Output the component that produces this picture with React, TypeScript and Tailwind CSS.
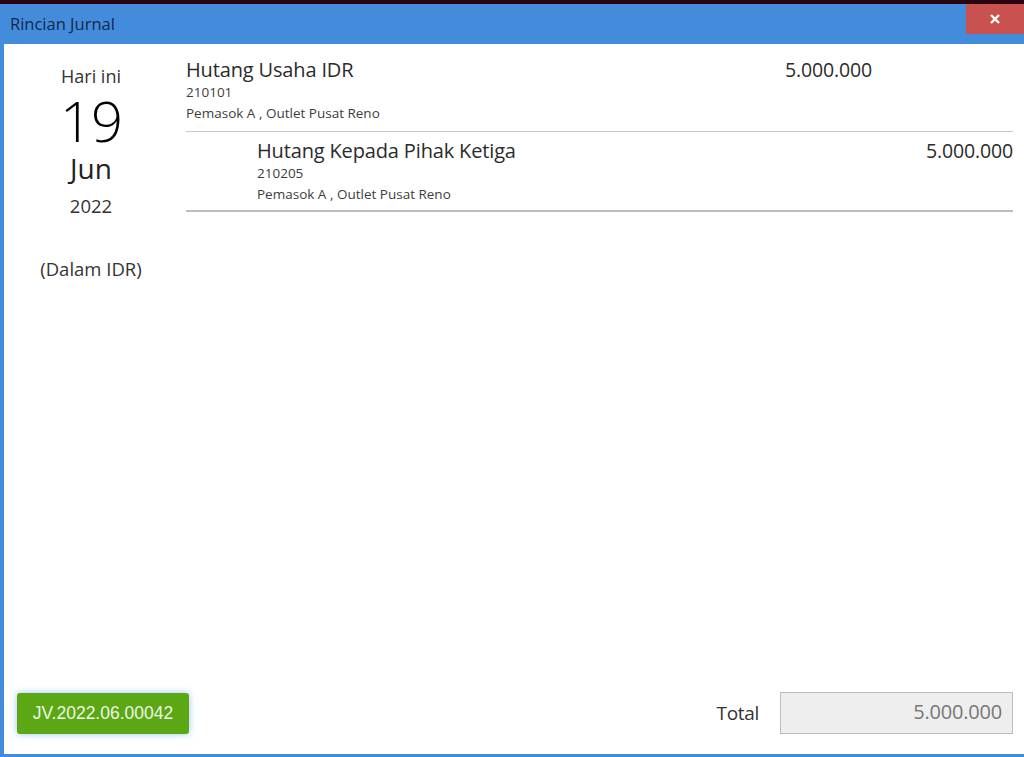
const font = "font-['Open_Sans','Noto_Sans',sans-serif]";

function JournalRow({ name, code, note, amount, indent }: { name: string; code: string; note: string; amount: string; indent?: boolean }) {
  return (
    <div className={indent ? 'flex h-[80px] border-b-2 border-[#bdbdbd] pt-[5px]' : 'flex h-[80.5px] border-b border-[#c8c8c8] pt-[5px]'}>
      <div className={indent ? 'w-[71px] shrink-0' : 'hidden'} />
      <div className="flex-1">
        <div className="text-[20px] leading-[28px] tracking-[-0.15px] text-[#2b2b2b]">{name}</div>
        <div className="text-[13.5px] leading-[17px] text-[#3d3d3d]">{code}</div>
        <div className="mt-[4px] text-[13.5px] leading-[17px] text-[#3d3d3d]">{note}</div>
      </div>
      <div className={indent ? 'text-right' : 'pr-[141px] text-right'}>
        <div className="text-[19.5px] leading-[28px] tracking-[-0.15px] text-[#2b2b2b]">{amount}</div>
      </div>
    </div>
  );
}

export default function App() {
  return (
    <div className={`h-[757px] w-[1024px] overflow-hidden bg-[#2a0510] pt-[4px] ${font}`}>
      <div className="flex h-[753px] flex-col bg-[#438cdc]">
        {/* Title bar */}
        <div className="flex h-[40px] shrink-0 items-start justify-between">
          <div className="pl-[10px] pt-[9px] text-[16.5px] leading-[21px] text-[#10294a]">Rincian Jurnal</div>
          <button className="flex h-[30px] w-[58px] items-center justify-center bg-[#c9514f]">
            <svg width="10" height="10" viewBox="0 0 10 10">
              <path d="M1 1l8 8M9 1l-8 8" stroke="#fff" strokeWidth="2.4" />
            </svg>
          </button>
        </div>

        {/* Body */}
        <div className="mb-[3px] ml-[4px] flex flex-1 flex-col bg-white">
          <div className="flex flex-1">
            <div className="w-[174px] shrink-0 pt-[20px] text-center text-[#333]">
              <div className="text-[18px] leading-[25px]">Hari ini</div>
              <div className="text-[56px] font-light leading-[62px] tracking-[-1px] text-black">19</div>
              <div className="text-[28px] leading-[34px] text-[#222]">Jun</div>
              <div className="mt-[9px] text-[18.5px] leading-[24px]">2022</div>
              <div className="mt-[38px] text-[18.5px] leading-[26px]">(Dalam IDR)</div>
            </div>
            <div className="ml-[8px] flex-1 pr-[11px] pt-[7px]">
              <JournalRow name="Hutang Usaha IDR" code="210101" note="Pemasok A , Outlet Pusat Reno" amount="5.000.000" />
              <JournalRow name="Hutang Kepada Pihak Ketiga" code="210205" note="Pemasok A , Outlet Pusat Reno" amount="5.000.000" indent />
            </div>
          </div>

          {/* Footer */}
          <div className="flex items-center justify-between pb-[20px] pl-[13px] pr-[11px]">
            <button className="h-[41px] w-[172px] rounded-[3px] bg-[#5ba714] font-['Liberation_Sans',sans-serif] text-[17.5px] text-[#eef5e4] shadow-[0_0_7px_rgba(70,150,240,0.55)]">
              JV.2022.06.00042
            </button>
            <div className="flex items-center">
              <span className="mr-[21px] text-[19px] tracking-[-0.3px] text-[#333]">Total</span>
              <div className="h-[42px] w-[233px] border border-[#bdbdbd] bg-[#eeeeee] pr-[10px] text-right text-[20px] leading-[38px] tracking-[-0.2px] text-[#777777]">
                5.000.000
              </div>
            </div>
          </div>
        </div>
      </div>
    </div>
  );
}
